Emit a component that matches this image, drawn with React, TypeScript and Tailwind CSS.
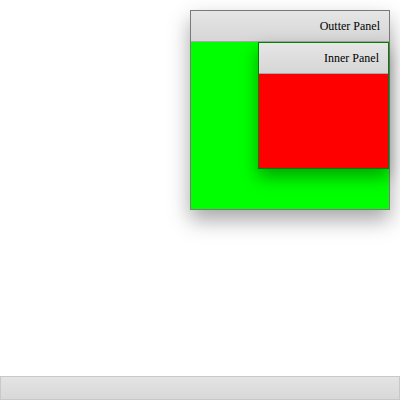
import React from "react";

export default function App() {
  return (
    <div className="h-[400px] w-[400px] flex flex-col bg-white" style={{ fontFamily: '"Liberation Serif", "Times New Roman", serif' }}>
      <div className="flex justify-end pt-[10px] pr-[10px]">
        <div className="w-[200px] h-[200px] border border-[#7a7a7a] flex flex-col shadow-[0_10px_20px_rgba(0,0,0,0.35)]">
          <div className="h-[31px] border-b border-[#a8a8a8] bg-gradient-to-b from-[#e6e6e6] to-[#d6d6d6] flex items-center justify-end pr-[9px] text-[12px] text-black">
            Outter Panel
          </div>
          <div className="flex-1 bg-[#00ff00] flex justify-end items-start">
            <div className="w-[131px] h-[127px] border border-[#008000] flex flex-col shadow-[0_8px_16px_rgba(0,0,0,0.35)]">
              <div className="h-[31px] border-b border-[#a8a8a8] bg-gradient-to-b from-[#e6e6e6] to-[#d6d6d6] flex items-center justify-end pr-[9px] text-[12px] text-black">
                Inner Panel
              </div>
              <div className="flex-1 bg-[#ff0000]" />
            </div>
          </div>
        </div>
      </div>
      <div className="mt-auto h-[24px] border border-[#c8c8c8] bg-gradient-to-b from-[#e4e4e4] to-[#d8d8d8]" />
    </div>
  );
}
